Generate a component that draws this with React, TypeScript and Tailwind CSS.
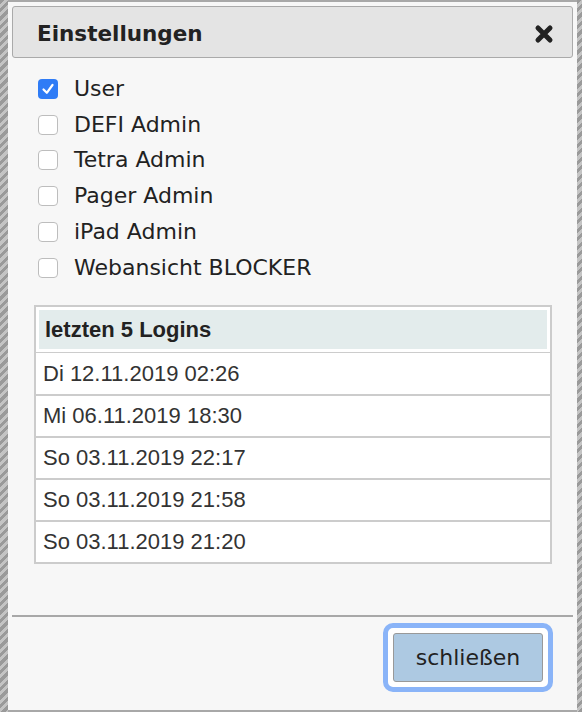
import React, { useState } from "react";

const ROLES = ["User", "DEFI Admin", "Tetra Admin", "Pager Admin", "iPad Admin", "Webansicht BLOCKER"];
const LOGINS = [
  "Di 12.11.2019 02:26",
  "Mi 06.11.2019 18:30",
  "So 03.11.2019 22:17",
  "So 03.11.2019 21:58",
  "So 03.11.2019 21:20",
];

export default function App() {
  const [checked, setChecked] = useState<Record<string, boolean>>({ User: true });

  return (
    <div
      className="w-[582px] h-[712px] flex"
      style={{
        background: "repeating-linear-gradient(135deg, #9a9a9a 0px, #9a9a9a 3px, #c4c4c4 3px, #c4c4c4 6px)",
      }}
    >
      <div className="ml-[8px] mr-[5px] flex-1 bg-[#f7f7f7] border-t-[2px] border-b-[2px] border-[#a8a8a8] flex flex-col font-['DejaVu_Sans',Verdana,sans-serif] text-[#222]">
        <div className="mx-[4px] mt-[4px] h-[52px] bg-[#e4e4e4] border border-[#aaa] rounded-[3px] flex items-center justify-between pl-[24px] pr-[18px] pt-[3px]">
          <span className="text-[21.5px] font-bold text-[#222] leading-none">Einstellungen</span>
          <svg width="20" height="20" viewBox="0 0 20 20">
            <path d="M4 4 L16 16 M16 4 L4 16" stroke="#222" strokeWidth="5" strokeLinecap="round" />
          </svg>
        </div>

        <div className="pl-[30px] pt-[13px] flex flex-col">
          {ROLES.map((r) => {
            const on = !!checked[r];
            return (
              <label key={r} className="h-[35.8px] flex items-center gap-[16px] cursor-pointer">
                <span
                  onClick={() => setChecked((c) => ({ ...c, [r]: !c[r] }))}
                  className={`w-[20px] h-[20px] rounded-[4px] flex items-center justify-center ${
                    on ? "bg-[#2f7cf6]" : "bg-white border border-[#bdbdbd]"
                  }`}
                >
                  {on ? (
                    <svg width="14" height="14" viewBox="0 0 14 14">
                      <path d="M2.5 7.5 L5.8 10.8 L11.5 3" fill="none" stroke="white" strokeWidth="2.2" strokeLinecap="round" strokeLinejoin="round" />
                    </svg>
                  ) : null}
                </span>
                <span className="text-[22px] leading-none text-[#222]">{r}</span>
              </label>
            );
          })}
        </div>

        <div className="ml-[26px] mr-[25px] mt-[19px] border-[2px] border-[#cccccc] bg-white font-['Liberation_Sans',Arial,sans-serif]">
          <div className="m-[3px] h-[39px] bg-[#e3ecec] flex items-center pl-[6px] text-[22px] font-bold text-[#222]">
            letzten 5 Logins
          </div>
          {LOGINS.map((l, i) => (
            <div
              key={l}
              className={`h-[42px] flex items-center pl-[7px] text-[22px] text-[#333] ${i === 0 ? "border-t border-[#cccccc]" : "border-t-[2px] border-[#cccccc]"}`}
            >
              {l}
            </div>
          ))}
        </div>

        <div className="mx-[4px] mt-[51px] h-[2px] bg-[#a8a8a8]" />

        <div className="flex justify-end pr-[24px] pt-[6px]">
          <div className="shrink-0 p-[5px] border-[5px] border-[#8ab4f8] rounded-[10px] bg-white">
            <button
              type="button"
              className="block w-[150px] h-[49px] bg-[#adc9e2] border border-[#999] rounded-[3px] text-[22px] text-[#222]"
            >
              schließen
            </button>
          </div>
        </div>
      </div>
    </div>
  );
}
